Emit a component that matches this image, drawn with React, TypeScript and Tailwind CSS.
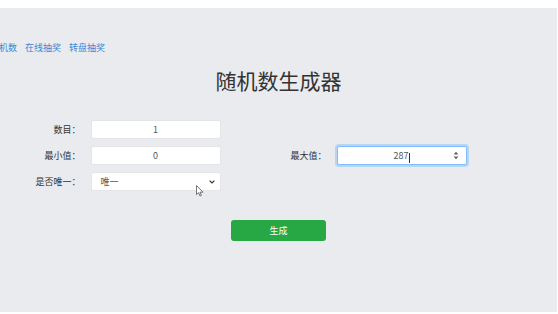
import React from 'react';

const font = { fontFamily: '"Noto Sans CJK SC", "Noto Sans", sans-serif' };

const Field: React.FC<{ label: string; children: React.ReactNode }> = ({ label, children }) => (
  <div className="flex w-[246px] items-center">
    <label className="w-[48px] shrink-0 text-right text-[9px] leading-[19px] text-[#333]">{label}</label>
    <div className="ml-[10px] w-[130px]">{children}</div>
  </div>
);

const boxCls =
  'h-[19px] w-full rounded-[2px] border border-[#e3e5e9] bg-white text-center text-[9px] leading-[17px] text-[#555]';

export default function App() {
  return (
    <div className="relative h-[314px] w-[558px] overflow-hidden bg-white pt-[8px]" style={font}>
      <div className="h-[304px] w-[557px] bg-[#e9ebef]">
        {/* top links */}
        <nav className="flex gap-[8px] pt-[34px] pl-0 text-[9px] leading-[12px] text-[#3a87d6] -ml-[10px]">
          <a>随机数</a>
          <a>在线抽奖</a>
          <a>转盘抽奖</a>
        </nav>

        <h1 className="mt-[12px] text-center text-[21px] leading-[28px] text-[#333]">随机数生成器</h1>

        <div className="mx-auto mt-[26px] flex w-[492px] flex-col gap-[7px]">
          <div className="flex">
            <Field label="数目：">
              <div className={boxCls}>1</div>
            </Field>
          </div>
          <div className="flex">
            <Field label="最小值：">
              <div className={boxCls}>0</div>
            </Field>
            <Field label="最大值：">
              <div className="relative h-[19px] w-full rounded-[2px] border border-[#80bdff] bg-white text-center text-[9px] leading-[17px] text-[#555] shadow-[0_0_0_2px_rgba(0,123,255,0.2)]">
                <span>287</span>
                <span className="inline-block h-[10px] w-px translate-y-[1px] bg-[#333] align-middle" />
                <svg className="absolute right-[7px] top-[4px]" width="6" height="9" viewBox="0 0 6 9">
                  <path d="M0.5 3.5 L3 0.8 L5.5 3.5 Z" fill="#666" />
                  <path d="M0.5 5.5 L3 8.2 L5.5 5.5 Z" fill="#666" />
                </svg>
              </div>
            </Field>
          </div>
          <div className="flex">
            <Field label="是否唯一：">
              <div className="relative h-[19px] w-full rounded-[2px] border border-[#e3e5e9] bg-white pl-[9px] text-left text-[9px] leading-[17px] text-[#555]">
                唯一
                <svg className="absolute right-[5px] top-[7px]" width="6" height="4" viewBox="0 0 6 4">
                  <path d="M0.6 0.6 L3 3 L5.4 0.6" fill="none" stroke="#333" strokeWidth="1.2" />
                </svg>
              </div>
            </Field>
          </div>
        </div>

        <div className="mt-[29px] flex justify-center">
          <button className="h-[21px] w-[95px] rounded-[3px] bg-[#28a745] text-[9px] leading-[21px] text-white">
            生成
          </button>
        </div>
      </div>

      {/* mouse cursor */}
      <svg className="absolute left-[196px] top-[185px]" width="8" height="12" viewBox="0 0 8 12">
        <path d="M0.5 0.5 L0.5 9.5 L2.6 7.6 L4 11 L5.4 10.4 L4 7.2 L7 7.2 Z" fill="#fff" stroke="#555" strokeWidth="0.8" />
      </svg>
    </div>
  );
}
